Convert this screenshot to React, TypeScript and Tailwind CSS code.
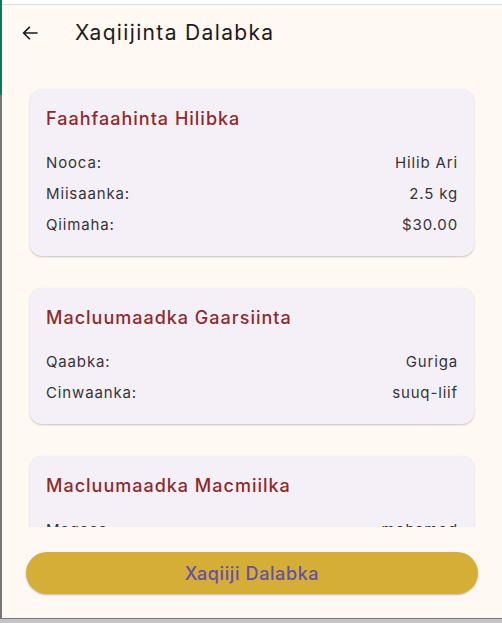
import React from "react";

const font = { fontFamily: "Inter, 'Open Sans', sans-serif" };

function Row({ label, value }: { label: string; value: string }) {
  return (
    <div className="flex h-[31px] pt-[3px] items-center justify-between text-[15px] text-[#35333a] tracking-[0.85px]">
      <span>{label}</span>
      <span>{value}</span>
    </div>
  );
}

function Card({ title, rows }: { title: string; rows: [string, string][] }) {
  return (
    <div className="rounded-[12px] bg-[#f5f0f8] px-4 pt-4 pb-[17px] shadow-[0_1px_2px_rgba(0,0,0,0.22)]">
      <div className="h-[26px] flex items-center text-[18px] font-medium text-[#8e2a2c] tracking-[1px]">
        {title}
      </div>
      <div className="mt-[15px] flex flex-col">
        {rows.map(([l, v]) => (
          <Row key={l} label={l} value={v} />
        ))}
      </div>
    </div>
  );
}

export default function App() {
  return (
    <div className="w-[502px] h-[623px] bg-[#c4c4c4] flex flex-col overflow-hidden" style={font}>
      <div className="h-[619px] flex border-b border-[#7a7a7a]">
        <div className="w-[2px] flex flex-col">
          <div className="h-[95px] bg-[#0b7a5c]" />
          <div className="flex-1 bg-[#777]" />
        </div>
        <div className="flex-1 flex flex-col bg-[#fff8f3] min-w-0">
          <div className="h-[4px] bg-white" />
          <div className="h-px bg-[#dcdcdc]" />
          <div className="h-[56px] flex items-center">
            <div className="w-[73px] pl-[19px] flex items-center">
              <svg width="18" height="18" viewBox="0 0 24 24" fill="none" stroke="#1d1b20" strokeWidth="2.2" strokeLinecap="square">
                <path d="M21 12H4M11 4.5L3.5 12l7.5 7.5" />
              </svg>
            </div>
            <div className="text-[21px] text-[#1d1b20] tracking-[1.35px]">Xaqiijinta Dalabka</div>
          </div>
          <div className="flex-1 overflow-hidden px-[28px] pt-[28px] flex flex-col gap-8 min-h-0">
            <Card
              title="Faahfaahinta Hilibka"
              rows={[
                ["Nooca:", "Hilib Ari"],
                ["Miisaanka:", "2.5 kg"],
                ["Qiimaha:", "$30.00"],
              ]}
            />
            <Card
              title="Macluumaadka Gaarsiinta"
              rows={[
                ["Qaabka:", "Guriga"],
                ["Cinwaanka:", "suuq-liif"],
              ]}
            />
            <Card
              title="Macluumaadka Macmiilka"
              rows={[
                ["Magaca:", "mohamed"],
                ["Telefoonka:", "615000000"],
              ]}
            />
          </div>
          <div className="px-6 pt-[25px] pb-[24px]">
            <button className="w-full h-[42px] rounded-full bg-[#d4ae36] text-[18px] font-medium text-[#6650a6] shadow-[0_1px_2px_rgba(0,0,0,0.25)] tracking-[0.6px]">
              Xaqiiji Dalabka
            </button>
          </div>
        </div>
      </div>
    </div>
  );
}
